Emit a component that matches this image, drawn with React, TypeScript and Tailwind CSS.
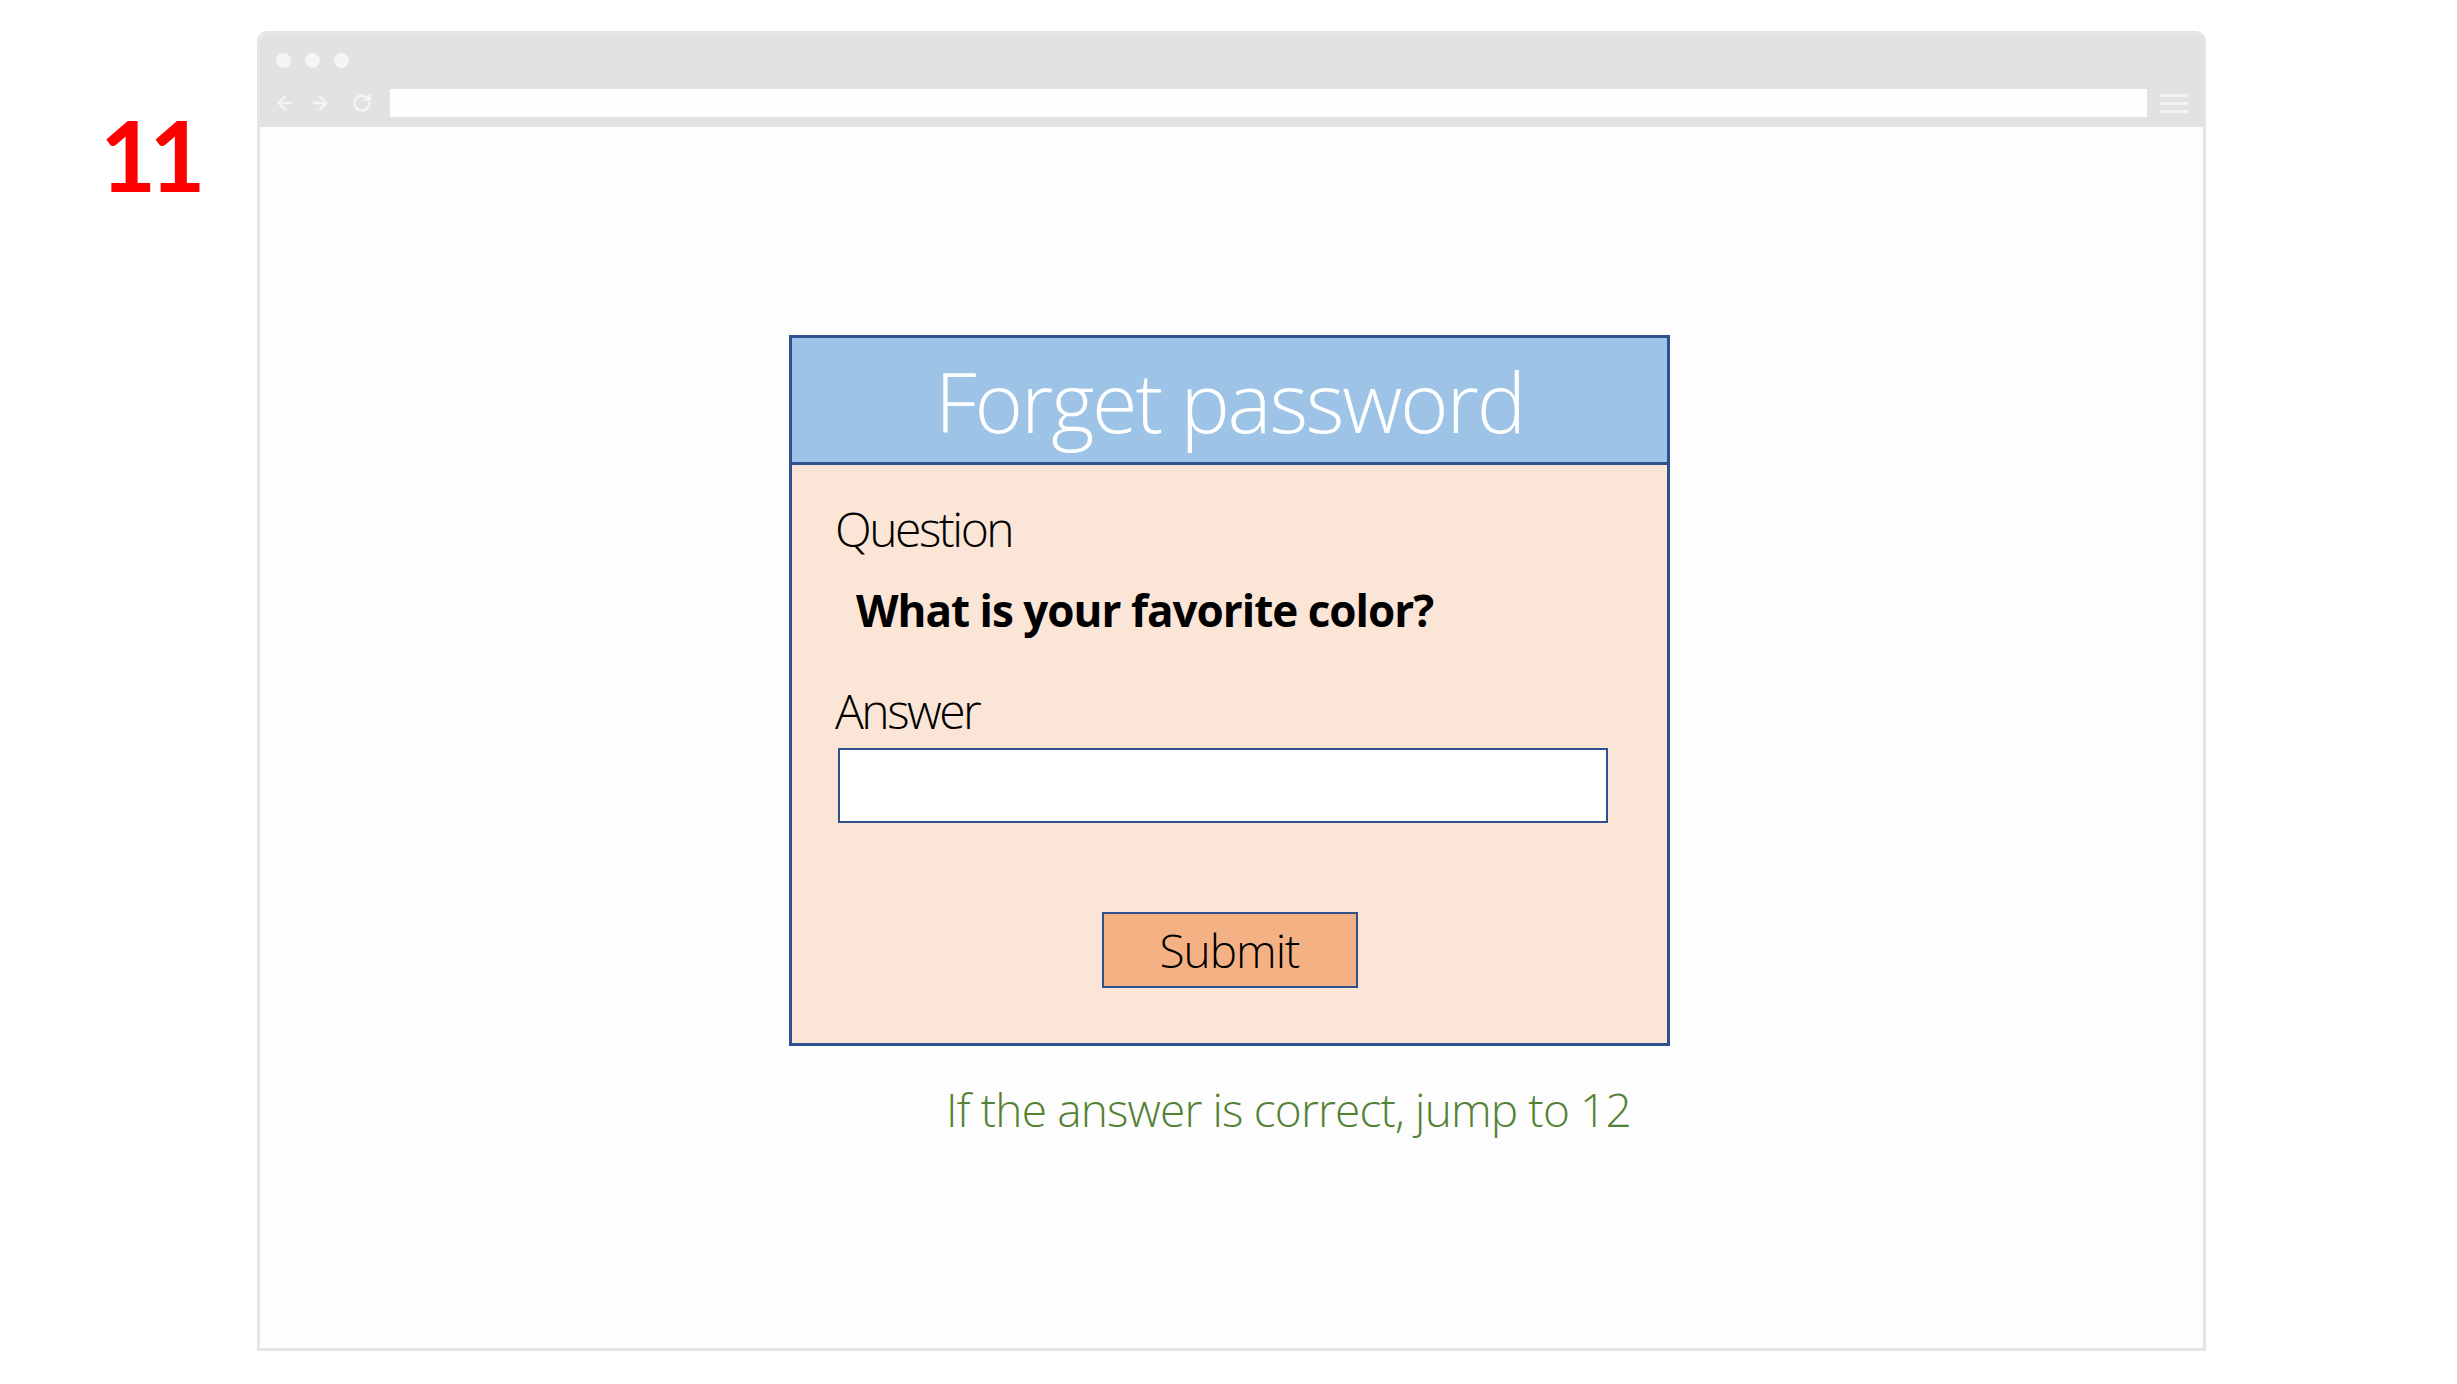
import { ArrowLeft, ArrowRight, RotateCw } from "lucide-react";

const light = "font-['Open_Sans','Noto_Sans',sans-serif] font-light";

function Toolbar() {
  return (
    <div className="bg-[#e2e2e2] rounded-t-[8px] pt-[19px] pb-[10px] pl-[16px] pr-[15px]">
      {/* window dots */}
      <div className="flex gap-[14px]">
        <span className="w-[15px] h-[15px] rounded-full bg-[#f5f5f5]" />
        <span className="w-[15px] h-[15px] rounded-full bg-[#f5f5f5]" />
        <span className="w-[15px] h-[15px] rounded-full bg-[#f5f5f5]" />
      </div>

      {/* nav + address bar */}
      <div className="flex items-center h-[28px] mt-[21px]">
        <ArrowLeft size={22} strokeWidth={2.5} className="text-[#f4f4f4] ml-[-2px]" />
        <ArrowRight size={22} strokeWidth={2.5} className="text-[#f4f4f4] ml-[13px]" />
        <RotateCw size={20} strokeWidth={3} className="text-[#f4f4f4] ml-[21px]" />
        <div className="flex-1 h-[28px] bg-[#fefefe] ml-[18px]" />
        <div className="flex flex-col gap-[5px] w-[28px] ml-[13px]">
          <span className="h-[3px] bg-[#f3f3f3]" />
          <span className="h-[3px] bg-[#f3f3f3]" />
          <span className="h-[3px] bg-[#f3f3f3]" />
        </div>
      </div>
    </div>
  );
}

function ForgetForm() {
  return (
    <div className="w-[881px] flex flex-col">
      <div className="border-[3px] border-[#2f528f]">
        {/* Header */}
        <div className="h-[127px] bg-[#9dc3e6] border-b-[3px] border-[#2f528f] flex items-center justify-center">
          <h1 className={`${light} text-[83px] leading-none text-white tracking-[-2.2px]`}>Forget password</h1>
        </div>

        {/* Body */}
        <div className="bg-[#fbe5d6] pt-[40px] pb-[55px]">
          <p className={`${light} text-[48px] leading-none text-black ml-[43px] tracking-[-2.5px]`}>Question</p>
          <p className="font-['Open_Sans','Noto_Sans',sans-serif] font-bold text-[44px] leading-none text-black mt-[35px] ml-[64px] tracking-[-1px]">
            What is your favorite color?
          </p>
          <p className={`${light} text-[48px] leading-none text-black mt-[55px] ml-[43px] tracking-[-2.5px]`}>Answer</p>
          <input
            type="text"
            className="block w-[770px] h-[75px] mt-[13px] ml-[46px] bg-white border-2 border-[#2f528f] outline-none"
          />
          <div className="flex justify-center mt-[89px]">
            <button className="w-[256px] h-[76px] bg-[#f4b183] border-2 border-[#2f528f] flex items-center justify-center">
              <span className={`${light} text-[46px] leading-none text-black tracking-[-1px]`}>Submit</span>
            </button>
          </div>
        </div>
      </div>

      <p className={`${light} text-[46px] leading-none text-[#548235] mt-[40px] pl-[157px] tracking-[-0.85px]`}>
        If the answer is correct, jump to 12
      </p>
    </div>
  );
}

export default function App() {
  return (
    <div className="w-[2457px] h-[1384px] bg-white flex">
      <div className="w-[257px] pt-[106px] pl-[100px]">
        <span className="font-['Lato','DejaVu_Sans',sans-serif] font-bold text-[97px] leading-none text-[#ff0000] tracking-[-7px]">
          11
        </span>
      </div>

      <div className="mt-[31px] w-[1949px] h-[1320px] border-[3px] border-[#e5e5e5] rounded-t-[10px] bg-[#fdfdfd] flex flex-col">
        <Toolbar />
        <div className="flex-1 flex flex-col items-center pt-[208px] pr-[4px]">
          <ForgetForm />
        </div>
      </div>
    </div>
  );
}
